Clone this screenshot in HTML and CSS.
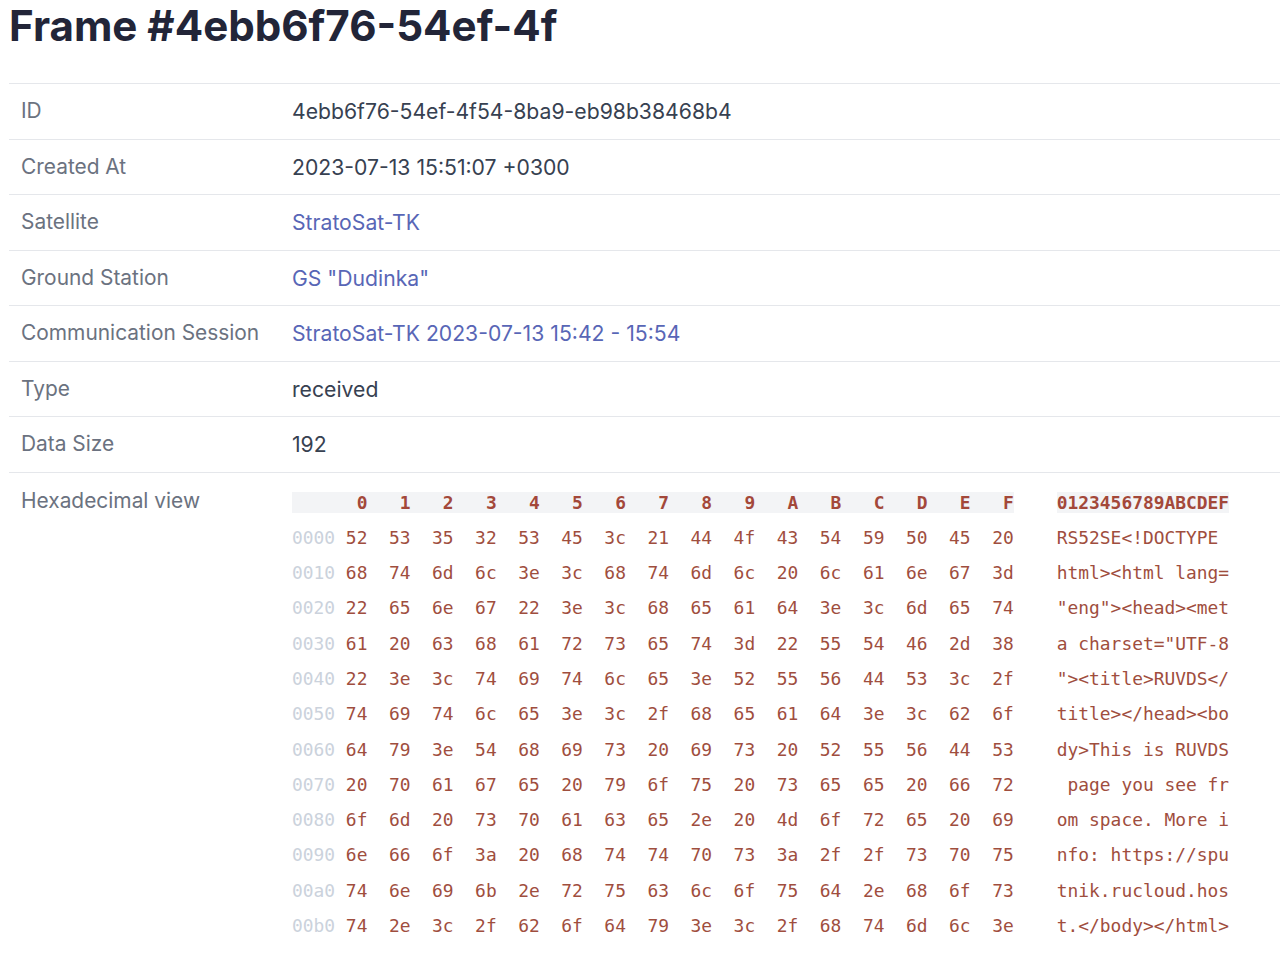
FILE: index.html
```html
<!DOCTYPE html>
<html lang="en">
<head>
<meta charset="utf-8">
<title>Frame #4ebb6f76-54ef-4f</title>
<link rel="stylesheet" href="styles.css">
</head>
<body>
<main class="page">
  <h1 class="title">Frame #4ebb6f76-54ef-4f</h1>
  <div class="details">
    <div class="row"><div class="label">ID</div><div class="value">4ebb6f76-54ef-4f54-8ba9-eb98b38468b4</div></div>
    <div class="row"><div class="label">Created At</div><div class="value">2023-07-13 15:51:07 +0300</div></div>
    <div class="row"><div class="label">Satellite</div><div class="value"><a class="link" href="#">StratoSat-TK</a></div></div>
    <div class="row"><div class="label">Ground Station</div><div class="value"><a class="link" href="#">GS "Dudinka"</a></div></div>
    <div class="row"><div class="label">Communication Session</div><div class="value"><a class="link" href="#">StratoSat-TK 2023-07-13 15:42 - 15:54</a></div></div>
    <div class="row"><div class="label">Type</div><div class="value">received</div></div>
    <div class="row"><div class="label">Data Size</div><div class="value">192</div></div>
    <div class="row row-hex"><div class="label">Hexadecimal view</div><div class="value value-hex"><pre class="hex"><span class="hex-head">      0   1   2   3   4   5   6   7   8   9   A   B   C   D   E   F</span>    <span class="hex-head">0123456789ABCDEF</span>
<span class="off">0000</span> 52  53  35  32  53  45  3c  21  44  4f  43  54  59  50  45  20    RS52SE&lt;!DOCTYPE 
<span class="off">0010</span> 68  74  6d  6c  3e  3c  68  74  6d  6c  20  6c  61  6e  67  3d    html&gt;&lt;html lang=
<span class="off">0020</span> 22  65  6e  67  22  3e  3c  68  65  61  64  3e  3c  6d  65  74    "eng"&gt;&lt;head&gt;&lt;met
<span class="off">0030</span> 61  20  63  68  61  72  73  65  74  3d  22  55  54  46  2d  38    a charset="UTF-8
<span class="off">0040</span> 22  3e  3c  74  69  74  6c  65  3e  52  55  56  44  53  3c  2f    "&gt;&lt;title&gt;RUVDS&lt;/
<span class="off">0050</span> 74  69  74  6c  65  3e  3c  2f  68  65  61  64  3e  3c  62  6f    title&gt;&lt;/head&gt;&lt;bo
<span class="off">0060</span> 64  79  3e  54  68  69  73  20  69  73  20  52  55  56  44  53    dy&gt;This is RUVDS
<span class="off">0070</span> 20  70  61  67  65  20  79  6f  75  20  73  65  65  20  66  72     page you see fr
<span class="off">0080</span> 6f  6d  20  73  70  61  63  65  2e  20  4d  6f  72  65  20  69    om space. More i
<span class="off">0090</span> 6e  66  6f  3a  20  68  74  74  70  73  3a  2f  2f  73  70  75    nfo: https://spu
<span class="off">00a0</span> 74  6e  69  6b  2e  72  75  63  6c  6f  75  64  2e  68  6f  73    tnik.rucloud.hos
<span class="off">00b0</span> 74  2e  3c  2f  62  6f  64  79  3e  3c  2f  68  74  6d  6c  3e    t.&lt;/body&gt;&lt;/html&gt;</pre></div></div>
  </div>
</main>
</body>
</html>
```

FILE: styles.css
```css
html, body {
  margin: 0;
  padding: 0;
  background: #ffffff;
}

body {
  font-family: Inter, "Noto Sans", "Liberation Sans", sans-serif;
  color: #374151;
}

.page {
  padding-left: 9px;
}

.title {
  margin: 0;
  padding-top: 1px;
  font-size: 42.1px;
  line-height: 50px;
  font-weight: 700;
  color: #222538;
}

.details {
  margin-top: 32px;
}

.row {
  display: grid;
  grid-template-columns: 283px 1fr;
  border-top: 1px solid #e5e7eb;
  font-size: 20.9px;
  line-height: 24.5px;
}

.label {
  padding: 15px 0 15px 12px;
  color: #6b7280;
}

.value {
  padding: 15px 0;
  color: #374151;
  font-size: 21.2px;
}

.link {
  color: #5866b6;
  text-decoration: none;
}

.row-hex .label {
  padding-top: 16px;
}

.value-hex {
  padding-top: 12px;
}

.hex {
  margin: 0;
  font-family: "DejaVu Sans Mono", "Liberation Mono", monospace;
  font-size: 17.9px;
  line-height: 35.3px;
  color: #9f4e3e;
}

.hex-head {
  background: #f3f4f6;
  font-weight: 700;
  color: #a3483a;
}

.off {
  color: #cbd2dc;
}
```
